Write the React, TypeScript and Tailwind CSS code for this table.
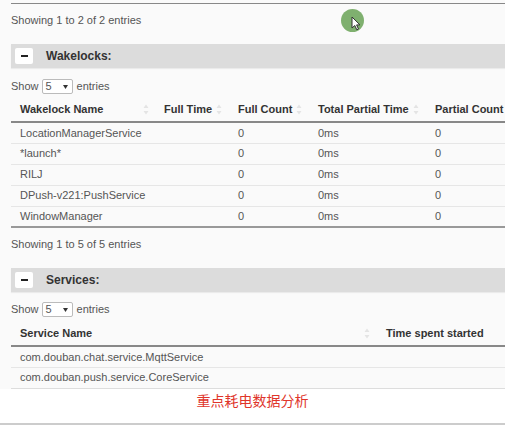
import React from "react";

const font = { fontFamily: '"Liberation Sans", Arial, "Noto Sans CJK SC", sans-serif' };

function SortIcon() {
  return (
    <svg width="6" height="11" viewBox="0 0 6 11" className="shrink-0">
      <path d="M3 0.5 L5.5 4 L0.5 4 Z" fill="#e4e4e4" />
      <path d="M3 10.5 L5.5 7 L0.5 7 Z" fill="#e4e4e4" />
    </svg>
  );
}

function SectionBar({ title }: { title: string }) {
  return (
    <div className="flex h-[24px] items-center bg-[#dcdcdc] pl-[4px] shadow-[0_1px_1px_rgba(0,0,0,0.06)]">
      <div className="flex h-[16px] w-[18px] items-center justify-center rounded-[2px] bg-white">
        <div className="h-[2px] w-[7px] bg-[#222]" />
      </div>
      <span className="ml-[13px] text-[12px] font-bold text-[#333]">{title}</span>
    </div>
  );
}

function ShowEntries() {
  return (
    <div className="flex h-[17px] items-center text-[11px] text-[#555]">
      <span>Show</span>
      <div className="ml-[3px] flex h-[15px] w-[31px] items-center justify-between rounded-[2px] border border-[#bbb] bg-white pl-[3px] pr-[4px]">
        <span className="text-[11px] leading-none">5</span>
        <svg width="5" height="4" viewBox="0 0 5 4">
          <path d="M0 0 L5 0 L2.5 4 Z" fill="#333" />
        </svg>
      </div>
      <span className="ml-[4px]">entries</span>
    </div>
  );
}

const wakelocks = [
  "LocationManagerService",
  "*launch*",
  "RILJ",
  "DPush-v221:PushService",
  "WindowManager",
];

export default function App() {
  return (
    <div className="relative h-[425px] w-[505px] overflow-hidden bg-[#fafafa]" style={font}>
      <div className="ml-[11px] w-[520px]">
        <div className="mt-[3px] h-[1px] bg-[#888]" />
        <div className="mt-[10px] text-[11px] leading-[13px] text-[#555]">Showing 1 to 2 of 2 entries</div>

        <div className="mt-[17px]">
          <SectionBar title="Wakelocks:" />
        </div>

        <div className="mt-[10px]">
          <ShowEntries />
        </div>

        <table className="mt-[3px] w-full border-collapse text-[11px] text-[#555]">
          <thead>
            <tr className="h-[24px] border-b-2 border-[#888] text-[#333]">
              <th className="w-[144px] pl-[9px] pr-[6px] text-left font-bold">
                <div className="flex items-center justify-between">
                  <span>Wakelock Name</span>
                  <SortIcon />
                </div>
              </th>
              <th className="w-[74px] pl-[9px] pr-[7px] text-left font-bold">
                <div className="flex items-center justify-between">
                  <span>Full Time</span>
                  <SortIcon />
                </div>
              </th>
              <th className="w-[80px] pl-[9px] pr-[7px] text-left font-bold">
                <div className="flex items-center justify-between">
                  <span>Full Count</span>
                  <SortIcon />
                </div>
              </th>
              <th className="w-[117px] pl-[9px] pr-[7px] text-left font-bold">
                <div className="flex items-center justify-between">
                  <span>Total Partial Time</span>
                  <SortIcon />
                </div>
              </th>
              <th className="pl-[9px] text-left font-bold">Partial Count</th>
            </tr>
          </thead>
          <tbody>
            {wakelocks.map((w, i) => (
              <tr
                key={w}
                className={
                  "h-[21px] " + (i === wakelocks.length - 1 ? "border-b-2 border-[#999]" : "border-b border-[#e6e6e6]")
                }
              >
                <td className="pl-[9px]">{w}</td>
                <td className="pl-[9px]"></td>
                <td className="pl-[9px]">0</td>
                <td className="pl-[9px]">0ms</td>
                <td className="pl-[9px]">0</td>
              </tr>
            ))}
          </tbody>
        </table>

        <div className="mt-[10px] text-[11px] leading-[13px] text-[#555]">Showing 1 to 5 of 5 entries</div>

        <div className="mt-[17px]">
          <SectionBar title="Services:" />
        </div>

        <div className="mt-[9px]">
          <ShowEntries />
        </div>

        <table className="mt-[4px] w-full border-collapse text-[11px] text-[#555]">
          <thead>
            <tr className="h-[24px] border-b-2 border-[#888] text-[#333]">
              <th className="w-[366px] pl-[9px] pr-[7px] text-left font-bold">
                <div className="flex items-center justify-between">
                  <span>Service Name</span>
                  <SortIcon />
                </div>
              </th>
              <th className="pl-[9px] text-left font-bold">Time spent started</th>
            </tr>
          </thead>
          <tbody>
            <tr className="h-[21px] border-b border-[#e6e6e6]">
              <td className="pl-[9px]">com.douban.chat.service.MqttService</td>
              <td></td>
            </tr>
            <tr className="h-[21px] border-b border-[#ddd]">
              <td className="pl-[9px]">com.douban.push.service.CoreService</td>
              <td></td>
            </tr>
          </tbody>
        </table>
      </div>

      <div className="flex h-[36px] justify-center border-b-2 border-[#ccc] bg-white pt-[3px]">
        <span className="text-[14px] leading-[18px] text-[#e0352b]">重点耗电数据分析</span>
      </div>

      <div className="absolute left-[341px] top-[9px] h-[23px] w-[23px] rounded-full bg-[#7fb06f]" />
      <svg className="absolute left-[351px] top-[16px]" width="10" height="15" viewBox="0 0 10 15">
        <path d="M1 1 L1 12 L3.8 9.5 L5.8 13.8 L7.5 13 L5.6 8.9 L9 8.9 Z" fill="#fff" stroke="#333" strokeWidth="1" />
      </svg>
    </div>
  );
}
